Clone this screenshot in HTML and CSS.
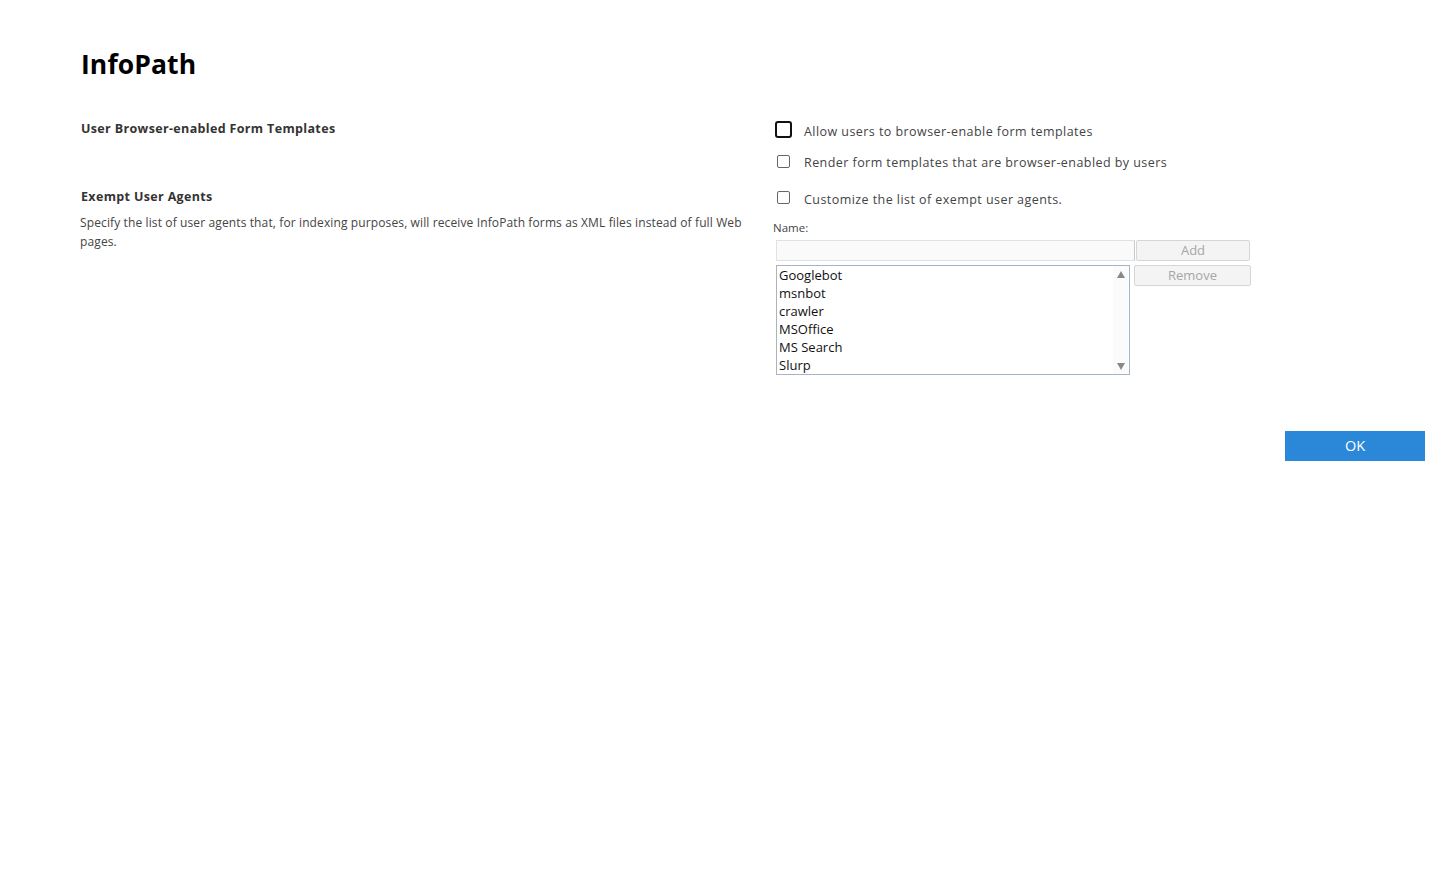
FILE: index.html
```html
<!DOCTYPE html>
<html>
<head>
<meta charset="utf-8">
<link rel="stylesheet" href="styles.css">
</head>
<body>
<div class="page">
  <h1 class="title">InfoPath</h1>
  <div class="section first-sec">
    <div class="left">
      <h3 class="sec-head">User Browser-enabled Form Templates</h3>
    </div>
    <div class="right">
      <label class="check-row row1"><span class="cb focused"></span><span class="cb-text">Allow users to browser-enable form templates</span></label>
      <label class="check-row row2"><span class="cb"></span><span class="cb-text">Render form templates that are browser-enabled by users</span></label>
    </div>
  </div>
  <div class="section second-sec">
    <div class="left">
      <h3 class="sec-head">Exempt User Agents</h3>
      <p class="desc">Specify the list of user agents that, for indexing purposes, will receive InfoPath forms as XML files instead of full Web pages.</p>
    </div>
    <div class="right">
      <label class="check-row row3"><span class="cb"></span><span class="cb-text">Customize the list of exempt user agents.</span></label>
      <div class="name-label">Name:</div>
      <div class="name-row">
        <div class="name-input"></div>
        <div class="btn add">Add</div>
      </div>
      <div class="list-row">
        <div class="listbox">
          <div class="items">
            <div class="item">Googlebot</div>
            <div class="item">msnbot</div>
            <div class="item">crawler</div>
            <div class="item">MSOffice</div>
            <div class="item">MS Search</div>
            <div class="item">Slurp</div>
          </div>
          <div class="scroll">
            <span class="arrow up"></span>
            <span class="arrow down"></span>
          </div>
        </div>
        <div class="btn remove">Remove</div>
      </div>
    </div>
  </div>
  <div class="footer">
    <div class="ok">OK</div>
  </div>
</div>
</body>
</html>
```

FILE: styles.css
```css
html, body {
  margin: 0;
  padding: 0;
  background: #fff;
}
body {
  font-family: "Open Sans", "Liberation Sans", sans-serif;
  color: #444;
}
.page {
  padding: 44px 15px 0 80px;
}
.title {
  margin: 0 0 0 1px;
  font-size: 26.5px;
  font-weight: 700;
  color: #000;
  line-height: 40px;
  letter-spacing: 0.1px;
}
.section {
  display: flex;
}
.first-sec {
  margin-top: 36px;
}
.second-sec {
  margin-top: 16px;
}
.left {
  width: 693px;
  flex: none;
}
.right {
  flex: 1;
}
.sec-head {
  margin: 0 0 0 1px;
  font-size: 12.5px;
  font-weight: 700;
  color: #333;
  line-height: 18px;
  letter-spacing: 0.35px;
}
.check-row {
  display: flex;
  align-items: flex-start;
  font-size: 12.5px;
  color: #444;
  letter-spacing: 0.44px;
  line-height: 18px;
}
.cb {
  box-sizing: border-box;
  width: 13px;
  height: 13px;
  border: 1px solid #666;
  border-radius: 2px;
  background: #fff;
  flex: none;
  margin-left: 4px;
  margin-right: 14px;
}
.cb.focused {
  width: 17px;
  height: 17px;
  border: 2px solid #111;
  border-radius: 3px;
  margin-left: 2px;
  margin-right: 12px;
  margin-top: -2px;
}
.row1 {
  margin-top: 3px;
}
.row2 {
  margin-top: 13px;
}
.row2 .cb {
  margin-top: 1px;
}
.row3 {
  margin-top: 3px;
}
.row3 .cb {
  margin-top: 0;
}
.desc {
  margin: 7px 0 0 0;
  font-size: 12px;
  line-height: 19px;
  color: #444;
  letter-spacing: 0.12px;
}
.name-label {
  margin-top: 12px;
  font-size: 11.5px;
  color: #444;
  line-height: 14px;
}
.name-row {
  display: flex;
  margin-top: 5px;
  margin-left: 3px;
}
.name-input {
  width: 357px;
  height: 19px;
  border: 1px solid #e1e1e1;
  border-right: 1px solid #c8c8c8;
  background: #fafafa;
}
.btn {
  box-sizing: border-box;
  height: 21px;
  border: 1px solid #d6d6d6;
  border-radius: 2px;
  background: #f4f4f4;
  color: #a6a6a6;
  font-size: 13px;
  text-align: center;
  line-height: 19px;
}
.btn.add {
  width: 114px;
  margin-left: 1px;
}
.list-row {
  display: flex;
  margin-top: 4px;
  margin-left: 3px;
  align-items: flex-start;
}
.listbox {
  box-sizing: border-box;
  width: 354px;
  height: 110px;
  border: 1px solid #a6b4c6;
  display: flex;
}
.items {
  flex: 1;
  padding-top: 0;
  padding-left: 2px;
}
.item {
  font-size: 13px;
  line-height: 18px;
  color: #111;
}
.scroll {
  width: 15px;
  background: #fbfbfb;
  display: flex;
  flex-direction: column;
  justify-content: space-between;
  align-items: center;
  padding: 5px 0 4px;
  margin-right: 1px;
}
.arrow {
  width: 0;
  height: 0;
  border-left: 4px solid transparent;
  border-right: 4px solid transparent;
}
.arrow.up {
  border-bottom: 7px solid #888;
}
.arrow.down {
  border-top: 7px solid #888;
}
.btn.remove {
  width: 117px;
  margin-left: 4px;
}
.footer {
  display: flex;
  justify-content: flex-end;
  margin-top: 56px;
}
.ok {
  width: 140px;
  height: 30px;
  background: #2b88d8;
  color: #fff;
  font-size: 14.5px;
  text-align: center;
  line-height: 30px;
}
```
